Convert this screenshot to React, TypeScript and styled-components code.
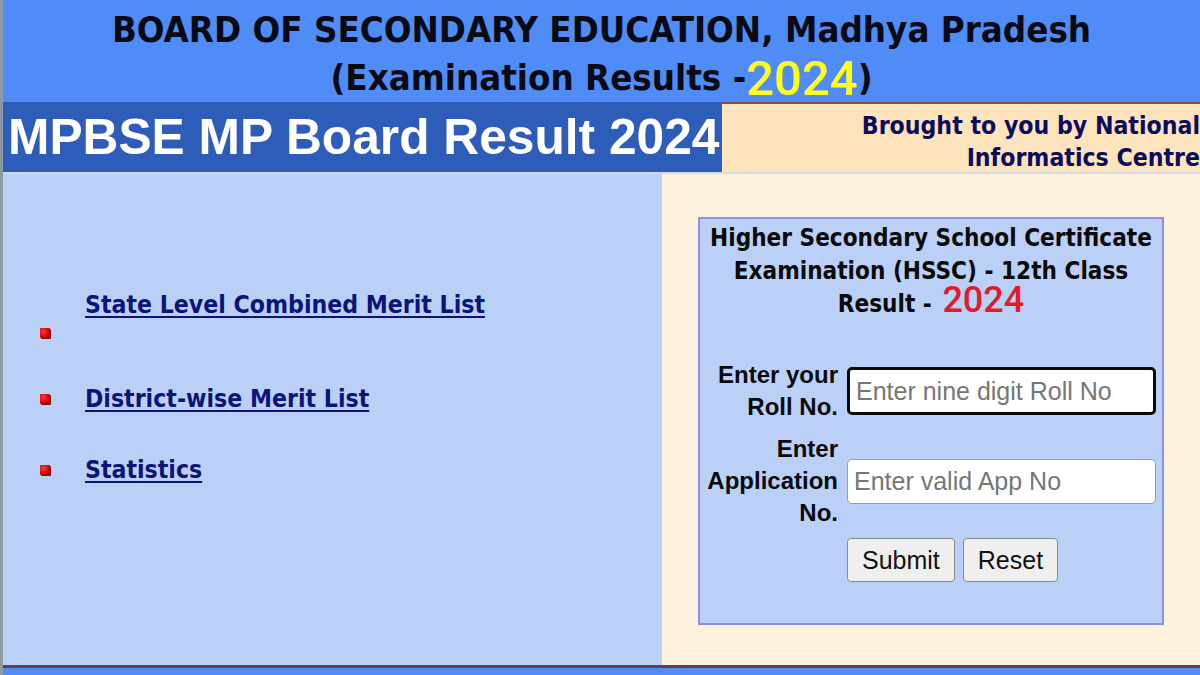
import React from 'react'
import styled, { createGlobalStyle } from 'styled-components'

const GlobalStyle = createGlobalStyle`
  html, body {
    margin: 0;
    padding: 0;
    background: #bbd0f6;
  }
  * { box-sizing: border-box; }
`;

// narrow bold sans, close to the Tahoma of the original page
const tahomaLike = `font-family: "DejaVu Sans Condensed", "DejaVu Sans", sans-serif; font-stretch: condensed;`;

const Page = styled.div`
  width: 1200px;
  height: 675px;
  overflow: hidden;
  display: flex;
  flex-direction: column;
  border-left: 3px solid #8d9aa6;
`;

const Header = styled.header`
  height: 102px;
  background: #4f8cf6;
  display: flex;
  flex-direction: column;
  align-items: center;
  color: #0a0a14;
  ${tahomaLike}
  font-weight: bold;
`;

const HeadLine = styled.div<{ $size: number; $top: number }>`
  font-size: ${p => p.$size}px;
  line-height: 1;
  margin-top: ${p => p.$top}px;
  white-space: nowrap;
`;

const Year = styled.span<{ $color: string; $size: number; $drop?: number; $gap?: number }>`
  font-family: Roboto, "Liberation Sans", sans-serif;
  font-weight: 500;
  font-stretch: normal;
  line-height: 0;
  vertical-align: ${p => -(p.$drop || 0)}px;
  margin-left: ${p => p.$gap || 0}px;
  color: ${p => p.$color};
  font-size: ${p => p.$size}px;
`;

const Band = styled.div`
  height: 70px;
  display: flex;
`;

const BandTitle = styled.h1`
  margin: 0;
  width: 719px;
  background: #2d5db8;
  color: #fff;
  font-family: "Liberation Sans", Arial, sans-serif;
  font-weight: bold;
  font-size: 49.7px;
  line-height: 70px;
  padding-left: 5px;
  white-space: nowrap;
`;

const Credit = styled.div`
  flex: 1;
  background: #fee4bd;
  border-top: 2px solid #8a4b4b;
  color: #0c0c5e;
  ${tahomaLike}
  font-weight: bold;
  font-size: 24.6px;
  line-height: 32px;
  text-align: right;
  padding-top: 6px;
  white-space: nowrap;
`;

const Main = styled.main`
  flex: 1;
  display: flex;
  border-top: 2px solid #d3dbe6;
`;

const LinksPanel = styled.section`
  width: 659px;
  background: #bbd0f6;
  padding: 114px 0 0 37px;
`;

const List = styled.ul`
  list-style: none;
  margin: 0;
  padding: 0;
`;

const Item = styled.li<{ $top: number; $bulletTop: number }>`
  display: flex;
  align-items: flex-start;
  margin-top: ${p => p.$top}px;

  &::before {
    content: "";
    flex: none;
    width: 10px;
    height: 10px;
    margin-top: ${p => p.$bulletTop}px;
    margin-right: 35px;
    background: radial-gradient(circle at 35% 35%, #ff3a3a, #d80000 60%, #8a0000);
    border-radius: 1px;
    box-shadow: 1px 1px 0 #7a1010;
  }
`;

const LinkText = styled.a`
  color: #0c1478;
  ${tahomaLike}
  font-weight: bold;
  font-size: 24.6px;
  line-height: 34px;
  text-decoration: underline;
  text-underline-offset: 3px;
  text-decoration-thickness: 2px;
`;

const FormPanel = styled.section`
  flex: 1;
  background: #fdf2e0;
  padding: 43px 0 0 36px;
`;

const ResultBox = styled.form`
  width: 466px;
  height: 408px;
  background: #bbd0f6;
  border: 2px solid #8d8fe2;
  padding-top: 3px;
`;

const BoxTitle = styled.h2`
  margin: 0;
  text-align: center;
  color: #0a0a0a;
  ${tahomaLike}
  font-weight: bold;
  font-size: 24.1px;
  line-height: 33px;
  white-space: nowrap;
`;

const Fields = styled.div`
  display: grid;
  grid-template-columns: 138px 309px;
  column-gap: 9px;
  row-gap: 10px;
  align-items: center;
  margin-top: 38px;
`;

const Label = styled.label`
  text-align: right;
  font-family: "Liberation Sans", Arial, sans-serif;
  font-weight: bold;
  font-size: 24px;
  line-height: 32px;
  color: #0a0a0a;
`;

const Input = styled.input<{ $strong?: boolean }>`
  width: 309px;
  height: ${p => (p.$strong ? 48 : 45)}px;
  border: ${p => (p.$strong ? '3px solid #0a0a0a' : '1px solid #9a9a9a')};
  border-radius: 5px;
  background: #fff;
  padding: 0 6px;
  font-family: "Liberation Sans", Arial, sans-serif;
  font-size: 25px;
  outline: none;

  &::placeholder {
    color: #767676;
  }
`;

const Buttons = styled.div`
  grid-column: 2;
  display: flex;
  gap: 8px;
  margin-top: -1px;
`;

const Button = styled.button`
  height: 44px;
  padding: 0 14px;
  background: #efefef;
  border: 1px solid #8a8a8a;
  border-radius: 4px;
  font-family: "Liberation Sans", Arial, sans-serif;
  font-size: 25px;
  color: #111;
`;

const Footer = styled.footer`
  height: 10px;
  background: #4f8cf6;
  border-top: 3px solid #6c3a48;
`;

const App = () => {
  return (
    <>
      <GlobalStyle />
      <Page>
        <Header>
          <HeadLine $size={36.3} $top={12}>BOARD OF SECONDARY EDUCATION, Madhya Pradesh</HeadLine>
          <HeadLine $size={36.3} $top={12}>
            (Examination Results -<Year $color="#ffff1a" $size={49} $drop={5}>2024</Year>)
          </HeadLine>
        </Header>
        <Band>
          <BandTitle>MPBSE MP Board Result 2024</BandTitle>
          <Credit>
            Brought to you by National<br />
            Informatics Centre
          </Credit>
        </Band>
        <Main>
          <LinksPanel>
            <List>
              <Item $top={0} $bulletTop={40}><LinkText href="#">State Level Combined Merit List</LinkText></Item>
              <Item $top={44} $bulletTop={12}><LinkText href="#">District-wise Merit List</LinkText></Item>
              <Item $top={37} $bulletTop={12}><LinkText href="#">Statistics</LinkText></Item>
            </List>
          </LinksPanel>
          <FormPanel>
            <ResultBox onSubmit={e => e.preventDefault()}>
              <BoxTitle>
                Higher Secondary School Certificate<br />
                Examination (HSSC) - 12th Class<br />
                Result - <Year $color="#e01c2c" $size={36} $gap={3}>2024</Year>
              </BoxTitle>
              <Fields>
                <Label htmlFor="roll">Enter your<br />Roll No.</Label>
                <Input id="roll" $strong placeholder="Enter nine digit Roll No" />
                <Label htmlFor="app">Enter<br />Application<br />No.</Label>
                <Input id="app" placeholder="Enter valid App No" />
                <Buttons>
                  <Button type="submit">Submit</Button>
                  <Button type="reset">Reset</Button>
                </Buttons>
              </Fields>
            </ResultBox>
          </FormPanel>
        </Main>
        <Footer />
      </Page>
    </>
  )
}

export default App
